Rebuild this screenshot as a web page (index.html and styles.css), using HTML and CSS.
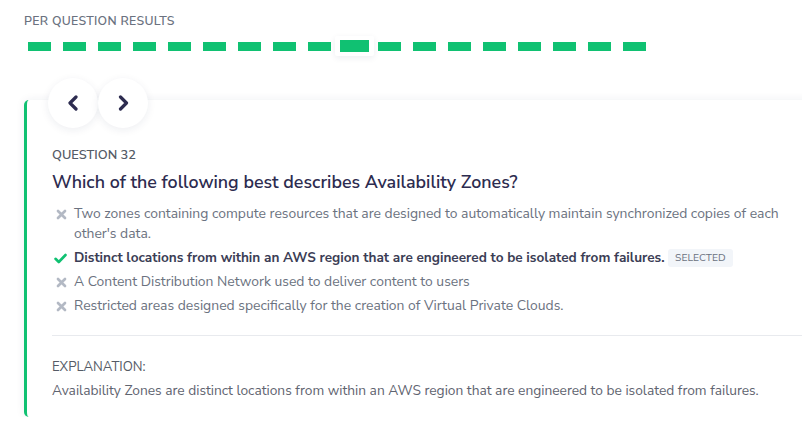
FILE: index.html
```html
<!DOCTYPE html>
<html>
<head>
<meta charset="utf-8">
<link rel="stylesheet" href="styles.css">
</head>
<body>
<div class="page">
  <div class="section-title">PER QUESTION RESULTS</div>
  <div class="dashes">
    <span class="cell"><i class="bar"></i></span>
    <span class="cell"><i class="bar"></i></span>
    <span class="cell"><i class="bar"></i></span>
    <span class="cell"><i class="bar"></i></span>
    <span class="cell"><i class="bar"></i></span>
    <span class="cell"><i class="bar"></i></span>
    <span class="cell"><i class="bar"></i></span>
    <span class="cell"><i class="bar"></i></span>
    <span class="cell"><i class="bar"></i></span>
    <span class="cell active"><i class="bar"></i></span>
    <span class="cell"><i class="bar"></i></span>
    <span class="cell"><i class="bar"></i></span>
    <span class="cell"><i class="bar"></i></span>
    <span class="cell"><i class="bar"></i></span>
    <span class="cell"><i class="bar"></i></span>
    <span class="cell"><i class="bar"></i></span>
    <span class="cell"><i class="bar"></i></span>
    <span class="cell"><i class="bar"></i></span>
  </div>

  <div class="card">
    <div class="nav">
      <button class="nav-btn" aria-label="Previous">
        <svg width="14" height="16" viewBox="0 0 14 16"><path d="M10 2 L4 8 L10 14" fill="none" stroke="#2d2c50" stroke-width="3.2" stroke-linecap="round" stroke-linejoin="round"/></svg>
      </button>
      <button class="nav-btn" aria-label="Next">
        <svg width="14" height="16" viewBox="0 0 14 16"><path d="M4.5 2 L10.5 8 L4.5 14" fill="none" stroke="#2d2c50" stroke-width="3.2" stroke-linecap="round" stroke-linejoin="round"/></svg>
      </button>
    </div>

    <div class="q-label">QUESTION 32</div>
    <h2 class="q-title">Which of the following best describes Availability Zones?</h2>

    <ul class="options">
      <li class="opt">
        <span class="icon"><svg width="11" height="11" viewBox="0 0 11 11"><path d="M2 2 L9 9 M9 2 L2 9" stroke="#b3b9c4" stroke-width="2.7" stroke-linecap="round"/></svg></span>
        <span class="opt-text">Two zones containing compute resources that are designed to automatically maintain synchronized copies of each other's data.</span>
      </li>
      <li class="opt correct">
        <span class="icon"><svg width="13" height="11" viewBox="0 0 13 11"><path d="M1.5 5.8 L4.8 9 L11.5 2" fill="none" stroke="#10c172" stroke-width="2.6" stroke-linecap="round" stroke-linejoin="round"/></svg></span>
        <span class="opt-text"><b>Distinct locations from within an AWS region that are engineered to be isolated from failures.</b> <span class="badge">SELECTED</span></span>
      </li>
      <li class="opt">
        <span class="icon"><svg width="11" height="11" viewBox="0 0 11 11"><path d="M2 2 L9 9 M9 2 L2 9" stroke="#b3b9c4" stroke-width="2.7" stroke-linecap="round"/></svg></span>
        <span class="opt-text">A Content Distribution Network used to deliver content to users</span>
      </li>
      <li class="opt">
        <span class="icon"><svg width="11" height="11" viewBox="0 0 11 11"><path d="M2 2 L9 9 M9 2 L2 9" stroke="#b3b9c4" stroke-width="2.7" stroke-linecap="round"/></svg></span>
        <span class="opt-text">Restricted areas designed specifically for the creation of Virtual Private Clouds.</span>
      </li>
    </ul>

    <div class="explanation">
      <div class="exp-label">EXPLANATION:</div>
      <div class="exp-text">Availability Zones are distinct locations from within an AWS region that are engineered to be isolated from failures.</div>
    </div>
  </div>
</div>
</body>
</html>
```

FILE: styles.css
```css
html, body {
  margin: 0;
  padding: 0;
  overflow: hidden;
  background: #ffffff;
}
body {
  font-family: "Nunito Sans", Lato, "Open Sans", sans-serif;
  color: #6b7280;
}
.page {
  padding: 12px 0 0 24px;
}
.section-title {
  font-size: 12.3px;
  font-weight: 600;
  line-height: 18px;
  letter-spacing: 0.3px;
  color: #6b7280;
  margin-bottom: 6px;
}
.dashes {
  display: flex;
  height: 20px;
  margin-left: -2px;
}
.cell {
  width: 35px;
  height: 20px;
  display: flex;
  align-items: center;
  justify-content: center;
  flex: none;
}
.bar {
  display: block;
  width: 23px;
  height: 9px;
  background: #10c172;
}
.cell.active {
  width: 39px;
  margin: 0 -2px;
  background: #fff;
  box-shadow: 0 2px 6px rgba(30, 40, 80, 0.08);
  border-radius: 2px;
}
.cell.active .bar {
  width: 29px;
  height: 12px;
}
.card {
  position: relative;
  margin-top: 44px;
  width: 800px;
  box-sizing: border-box;
  border-left: 3px solid #10c172;
  border-radius: 5px 0 0 5px;
  background: #fff;
  box-shadow: 0 0 10px rgba(30, 40, 80, 0.07);
  padding: 46px 16px 16px 25px;
}
.nav {
  position: absolute;
  top: -22px;
  left: 21px;
  display: flex;
}
.nav-btn {
  width: 50px;
  height: 50px;
  border-radius: 50%;
  border: none;
  background: #fff;
  box-shadow: 0 2px 8px rgba(30, 40, 80, 0.08);
  display: flex;
  align-items: center;
  justify-content: center;
  padding: 0;
}
.q-label {
  font-size: 12.8px;
  font-weight: 600;
  line-height: 18px;
  color: #555b66;
  margin-bottom: 5px;
}
.q-title {
  margin: 0 0 9px 0;
  font-size: 17.85px;
  font-weight: 600;
  line-height: 26px;
  color: #2d2c50;
}
.options {
  list-style: none;
  margin: 0;
  padding: 0;
}
.opt {
  display: flex;
  font-size: 13.9px;
  line-height: 20px;
  margin-bottom: 4px;
  color: #6b7280;
}
.opt .icon {
  flex: none;
  width: 22px;
  display: flex;
  justify-content: flex-start;
  padding-left: 4px;
  box-sizing: border-box;
  height: 20px;
  align-items: center;
}
.opt.correct .icon {
  padding-left: 2px;
}
.opt-text {
  max-width: 720px;
}
.opt.correct b {
  font-size: 13.6px;
  font-weight: 700;
  color: #3b3d55;
}
.badge {
  display: inline-block;
  font-size: 10.3px;
  line-height: 18px;
  padding: 0 7px;
  margin-left: 0;
  background: #f2f5f9;
  border-radius: 3px;
  color: #6b7280;
  vertical-align: 1px;
}
.explanation {
  margin-top: 19px;
  border-top: 1px solid #e8eaee;
  padding-top: 22px;
}
.exp-label {
  font-size: 13.2px;
  line-height: 18px;
  color: #555b66;
  margin-bottom: 5px;
}
.exp-text {
  font-size: 13.75px;
  line-height: 20px;
  color: #5f6470;
}
```
